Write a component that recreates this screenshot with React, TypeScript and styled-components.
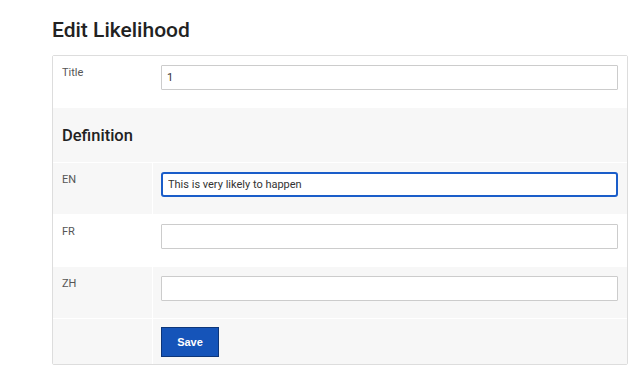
import styled, { createGlobalStyle } from "styled-components";

const GlobalStyle = createGlobalStyle`
  body {
    margin: 0;
    background: #ffffff;
    font-family: Roboto, "Liberation Sans", sans-serif;
  }
`;

interface Field {
  label: string;
  value: string;
  shaded: boolean;
  focused?: boolean;
}

const languages: Field[] = [
  { label: "EN", value: "This is very likely to happen", shaded: true, focused: true },
  { label: "FR", value: "", shaded: false },
  { label: "ZH", value: "", shaded: true },
];

const App: React.FC = () => {
  return (
    <>
      <GlobalStyle />
      <Page>
        <Heading>Edit Likelihood</Heading>
        <Panel>
          <Row>
            <Label $shaded={false}>Title</Label>
            <Value $shaded={false}>
              <Input defaultValue="1" />
            </Value>
          </Row>
          <SectionRow>
            <SectionTitle>Definition</SectionTitle>
          </SectionRow>
          {languages.map((field) => (
            <Row key={field.label}>
              <Label $shaded={field.shaded}>{field.label}</Label>
              <Value $shaded={field.shaded}>
                <Input defaultValue={field.value} $focused={field.focused} />
              </Value>
            </Row>
          ))}
          <Row>
            <Label $shaded />
            <ActionCell>
              <SaveButton type="button">Save</SaveButton>
            </ActionCell>
          </Row>
        </Panel>
      </Page>
    </>
  );
};

const Page = styled.div`
  padding: 18px 9px 20px 52px;
`;

const Heading = styled.h1`
  margin: 0 0 12px;
  font-size: 21px;
  line-height: 25px;
  font-weight: 500;
  color: #222222;
`;

const Panel = styled.div`
  width: 574px;
  border: 1px solid #dddddd;
  border-radius: 2px;
  background: #ffffff;
  display: flex;
  flex-direction: column;
  gap: 1px;
`;

const Row = styled.div`
  display: grid;
  grid-template-columns: 99px 1fr;
  column-gap: 1px;
`;

interface CellProps {
  $shaded: boolean;
}

const Label = styled.div<CellProps>`
  padding: 10px 9px;
  font-size: 11px;
  line-height: 13px;
  color: #555555;
  background: ${({ $shaded }) => ($shaded ? "#f7f7f7" : "#ffffff")};
`;

const Value = styled.div<CellProps>`
  padding: 9px 8px 17px;
  background: ${({ $shaded }) => ($shaded ? "#f7f7f7" : "#ffffff")};
`;

const SectionRow = styled.div`
  display: flex;
  align-items: center;
  height: 54px;
  padding: 0 9px;
  background: #f7f7f7;
`;

const SectionTitle = styled.h2`
  margin: 0;
  font-size: 16.5px;
  font-weight: 500;
  color: #222222;
`;

interface InputProps {
  $focused?: boolean;
}

const Input = styled.input<InputProps>`
  box-sizing: border-box;
  display: block;
  width: 457px;
  height: 25px;
  padding: 0 5px;
  font-family: Roboto, "Liberation Sans", sans-serif;
  font-size: 11px;
  color: #333333;
  background: #ffffff;
  border: ${({ $focused }) =>
    $focused ? "2px solid #1a5dc9" : "1px solid #cccccc"};
  border-radius: ${({ $focused }) => ($focused ? "3px" : "1px")};
  outline: none;
`;

const ActionCell = styled.div`
  padding: 8px 8px 7px;
  background: #f7f7f7;
`;

const SaveButton = styled.button`
  display: block;
  width: 58px;
  height: 30px;
  padding: 0;
  font-family: "Liberation Sans", Arial, sans-serif;
  font-size: 11px;
  font-weight: 700;
  color: #ffffff;
  background: #1554b9;
  border: 1px solid #0d3679;
  border-radius: 0;
`;

export default App;
